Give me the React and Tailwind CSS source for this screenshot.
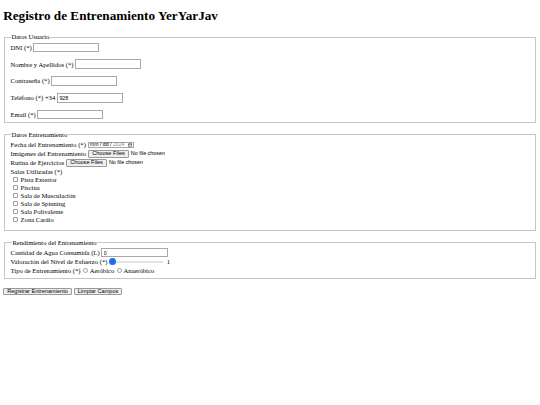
const salas = [
  "Pista Exterior",
  "Piscina",
  "Sala de Musculación",
  "Sala de Spinning",
  "Sala Polivalente",
  "Zona Cardio",
];

function TextRow({ label, value = "", type = "text" }) {
  return (
    <label className="flex h-[9.6px] items-center">
      <span>{label}</span>
      <input
        type={type}
        defaultValue={value}
        className="ml-[1.8px] h-[9.6px] w-[66px] border border-[#a8a8a8] bg-white px-[1.4px] font-['Liberation_Sans',sans-serif] text-[5.3px] outline-none"
      />
    </label>
  );
}

function FileRow({ label }) {
  return (
    <div className="flex h-[9px] items-center">
      <span>{label}</span>
      <button
        type="button"
        className="ml-[1.8px] h-[7.4px] rounded-[1px] border border-[#9a9a9a] bg-[#efefef] px-[3.4px] font-['Liberation_Sans',sans-serif] text-[5.6px] leading-none"
      >
        Choose Files
      </button>
      <span className="ml-[1.6px] font-['Liberation_Sans',sans-serif] text-[5.4px]">No file chosen</span>
    </div>
  );
}

export default function App() {
  return (
    <div className="min-h-screen bg-white px-[3.2px] font-['Liberation_Serif',serif] text-[6.6px] leading-[7.4px] text-black">
      <h1 className="mb-[10px] pt-[8.6px] text-[13.2px] font-bold leading-[14.7px]">
        Registro de Entrenamiento YerYarJav
      </h1>

      <form onSubmit={(e) => e.preventDefault()}>
        {/* datos usuario */}
        <fieldset className="mx-[0.8px] border border-[#c6c6c6] px-[5.6px] pb-[2.6px] pt-[2px]">
          <legend className="px-[0.8px]">Datos Usuario</legend>
          <div className="flex flex-col gap-[7.2px]">
            <TextRow label="DNI (*)" />
            <TextRow label="Nombre y Apellidos (*)" />
            <TextRow label="Contraseña (*)" type="password" />
            <TextRow label="Teléfono (*) +34" value="928" />
            <TextRow label="Email (*)" type="email" />
          </div>
        </fieldset>

        {/* datos entrenamiento */}
        <fieldset className="mx-[0.8px] mt-[8px] border border-[#c6c6c6] px-[5.6px] pb-[6.4px] pt-[2px]">
          <legend className="px-[0.8px]">Datos Entrenamiento</legend>
          <div className="flex h-[9px] items-center">
            <span>Fecha del Entrenamiento (*)</span>
            <div className="ml-[1.8px] flex h-[6.8px] w-[46px] items-center justify-between whitespace-nowrap border border-[#a8a8a8] pl-[1.2px] pr-[0.8px] font-['Liberation_Sans',sans-serif] text-[5.2px] leading-none">
              <span>
                mm / dd / <span className="text-[#8a8a8a]">2024</span>
              </span>
              <svg viewBox="0 0 10 10" className="h-[4.2px] w-[4.2px] shrink-0" fill="none" stroke="#222" strokeWidth="1.3">
                <rect x="1" y="1.5" width="8" height="7.5" rx="0.8" />
                <line x1="1" y1="4" x2="9" y2="4" />
              </svg>
            </div>
          </div>
          <FileRow label="Imágenes del Entrenamiento" />
          <FileRow label="Rutina de Ejercicios" />
          <div className="flex h-[7.8px] items-center">Salas Utilizadas (*)</div>
          {salas.map((s) => (
            <label key={s} className="flex h-[8px] items-center">
              <input
                type="checkbox"
                className="ml-[2px] mr-[3px] h-[5px] w-[5px] appearance-none rounded-[1px] border border-[#9c9c9c] bg-white"
              />
              {s}
            </label>
          ))}
        </fieldset>

        {/* rendimiento */}
        <fieldset className="mx-[0.8px] mt-[8px] border border-[#c6c6c6] px-[5.6px] pb-[3px] pt-[2px]">
          <legend className="ml-[1px] px-[0.8px]">Rendimiento del Entrenamiento</legend>
          <label className="flex h-[9px] items-center">
            <span>Cantidad de Agua Consumida (L)</span>
            <input
              type="number"
              defaultValue="0"
              className="ml-[1.8px] h-[8.4px] w-[67px] border border-[#a8a8a8] px-[1.4px] font-['Liberation_Sans',sans-serif] text-[5.3px] outline-none [appearance:textfield]"
            />
          </label>
          <label className="flex h-[9.5px] items-center">
            <span>Valoración del Nivel de Esfuerzo (*)</span>
            <input
              type="range"
              min="1"
              max="10"
              defaultValue="1"
              className="ml-[2px] h-[7px] w-[54px] appearance-none bg-transparent [&::-webkit-slider-runnable-track]:h-[2px] [&::-webkit-slider-runnable-track]:rounded-full [&::-webkit-slider-runnable-track]:bg-[#e3e3e3] [&::-webkit-slider-thumb]:mt-[-2.3px] [&::-webkit-slider-thumb]:h-[6.6px] [&::-webkit-slider-thumb]:w-[6.6px] [&::-webkit-slider-thumb]:appearance-none [&::-webkit-slider-thumb]:rounded-full [&::-webkit-slider-thumb]:bg-[#1b6fe8]"
            />
            <span className="ml-[3.4px]">1</span>
          </label>
          <div className="flex h-[8.5px] items-center">
            <span>Tipo de Entrenamiento (*)</span>
            <input
              type="radio"
              name="tipo"
              className="ml-[2.4px] mr-[1.8px] h-[5px] w-[5px] appearance-none rounded-full border border-[#9c9c9c] bg-white"
            />
            <span>Aeróbico</span>
            <input
              type="radio"
              name="tipo"
              className="ml-[2.4px] mr-[1.8px] h-[5px] w-[5px] appearance-none rounded-full border border-[#9c9c9c] bg-white"
            />
            <span>Anaeróbico</span>
          </div>
        </fieldset>

        <div className="mt-[8.6px] flex gap-[1.8px]">
          <button
            type="submit"
            className="h-[7.4px] rounded-[1px] border border-[#9a9a9a] bg-[#efefef] px-[3px] font-['Liberation_Sans',sans-serif] text-[5.6px] leading-none"
          >
            Registrar Entrenamiento
          </button>
          <button
            type="reset"
            className="h-[7.4px] rounded-[1px] border border-[#9a9a9a] bg-[#efefef] px-[3px] font-['Liberation_Sans',sans-serif] text-[5.6px] leading-none"
          >
            Limpiar Campos
          </button>
        </div>
      </form>
    </div>
  );
}
